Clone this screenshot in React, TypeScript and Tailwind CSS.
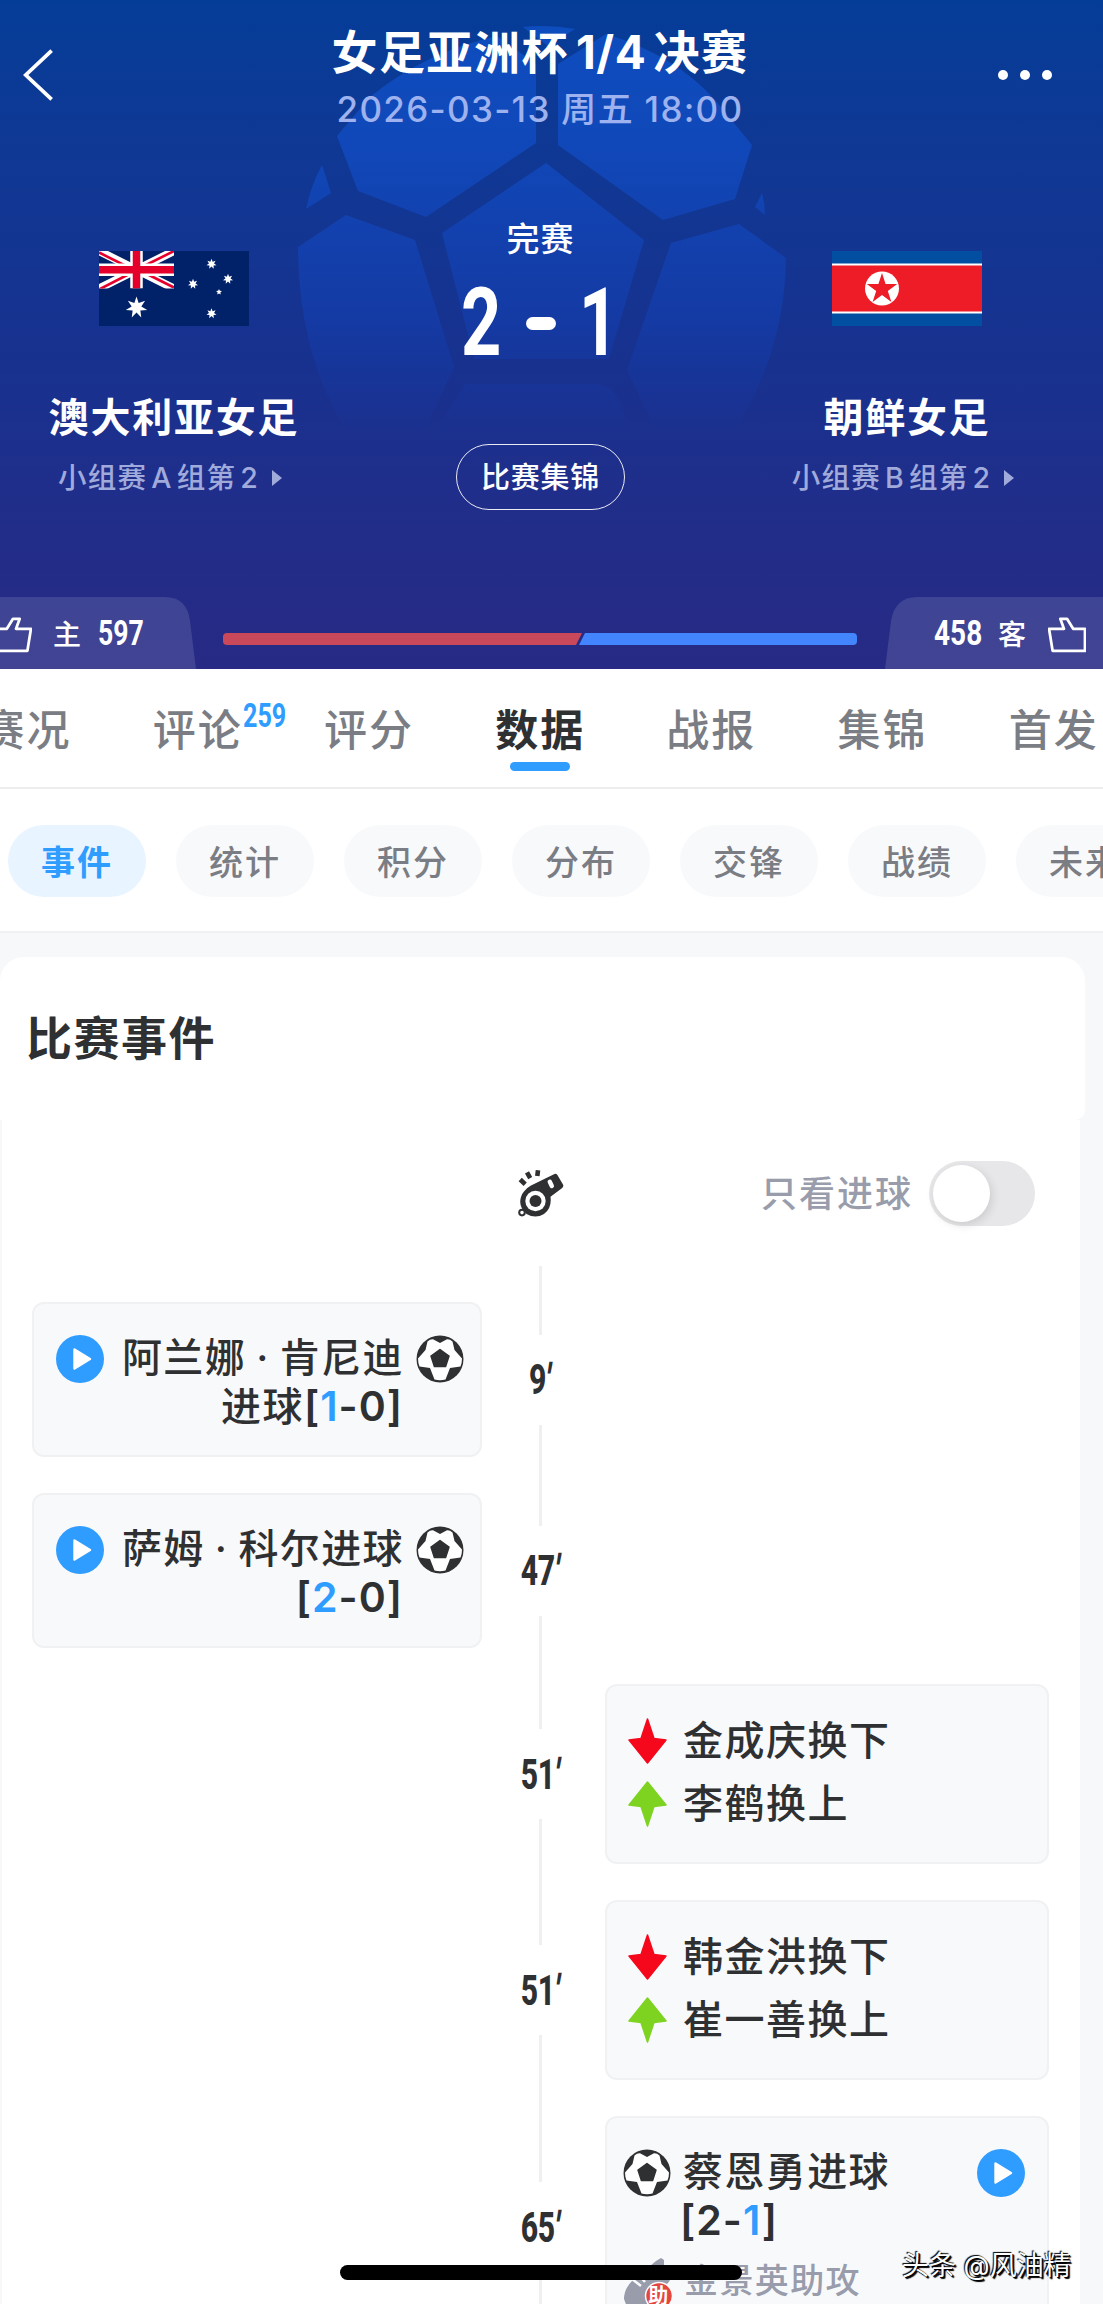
import React, { useState } from 'react';

type Side = 'home' | 'away';

interface MatchEvent {
  minute: string;
  side: Side;
  kind: 'goal' | 'sub';
  player: string;
  score?: [number, number];
  playerIn?: string;
  assist?: string;
}

const TABS = [
  { label: '赛况' },
  { label: '评论', count: 259 },
  { label: '评分' },
  { label: '数据' },
  { label: '战报' },
  { label: '集锦' },
  { label: '首发' },
];

const FILTERS = ['事件', '统计', '积分', '分布', '交锋', '战绩', '未来'];

const EVENTS: MatchEvent[] = [
  { minute: '9', side: 'home', kind: 'goal', player: '阿兰娜 · 肯尼迪', score: [1, 0] },
  { minute: '47', side: 'home', kind: 'goal', player: '萨姆 · 科尔', score: [2, 0] },
  { minute: '51', side: 'away', kind: 'sub', player: '金成庆', playerIn: '李鹤' },
  { minute: '51', side: 'away', kind: 'sub', player: '韩金洪', playerIn: '崔一善' },
  { minute: '65', side: 'away', kind: 'goal', player: '蔡恩勇', score: [2, 1], assist: '金景英' },
];

// n 角星的顶点坐标
const starPoints = (cx: number, cy: number, r: number, n: number, ratio: number) =>
  Array.from({ length: n * 2 }, (_, i) => {
    const rad = (Math.PI * i) / n - Math.PI / 2;
    const len = i % 2 ? r * ratio : r;
    return `${(cx + len * Math.cos(rad)).toFixed(2)},${(cy + len * Math.sin(rad)).toFixed(2)}`;
  }).join(' ');

const BallWatermark: React.FC = () => (
  <svg className="absolute left-0 top-0" width="1103" height="669" viewBox="0 0 1103 669">
    <defs>
      <linearGradient id="ballFade" gradientUnits="userSpaceOnUse" x1="0" y1="25" x2="0" y2="445">
        <stop offset="0" stopColor="#1257d6" stopOpacity="0.62" />
        <stop offset="0.3" stopColor="#1254d6" stopOpacity="0.55" />
        <stop offset="0.7" stopColor="#1148c8" stopOpacity="0.35" />
        <stop offset="1" stopColor="#1044b8" stopOpacity="0" />
      </linearGradient>
    </defs>
    <g fill="url(#ballFade)">
      <path d="M523 27 Q548 24 575 29 L548 46Z" />
      <path d="M536 64 L497 36 Q425 52 370 97 L337 136 L358 191 L426 217 L536 143Z" />
      <path d="M558 64 L606 34 Q675 55 715 100 L752 145 L735 199 L663 220 L558 145Z" />
      <path d="M322 165 L331 193 L306 209 Q311 185 322 165Z" />
      <path d="M762 193 Q765 204 765 215 L755 207Z" />
      <path d="M546 163 L644 240 L609 359 L474 359 L442 233Z" />
      <path d="M346 215 L415 240 L454 367 L425 430 L345 430 Q298 350 298 247Z" />
      <path d="M739 224 L671 243 L627 370 L655 430 L735 430 Q785 350 786 258Z" />
      <path d="M465 384 L600 384 Q625 390 628 440 L430 440Z" />
    </g>
  </svg>
);

const AustraliaFlag: React.FC = () => (
  <svg width="150" height="75" viewBox="0 0 150 75">
    <rect width="150" height="75" fill="#012169" />
    <svg width="75" height="37.5" viewBox="0 0 75 37.5">
      <path d="M0 0L75 37.5M75 0L0 37.5" stroke="#fff" strokeWidth="8" />
      <path d="M0 1.5L37 20M38 18L75 36.5M75 0L38 18.5M37 19.5L0 38.5" stroke="#e4002b" strokeWidth="2.6" />
      <path d="M37.5 0V37.5M0 18.75H75" stroke="#fff" strokeWidth="12.5" />
      <path d="M37.5 0V37.5M0 18.75H75" stroke="#e4002b" strokeWidth="7.5" />
    </svg>
    <g fill="#fff">
      <polygon points={starPoints(37.5, 56.5, 11, 7, 0.45)} />
      <polygon points={starPoints(112.5, 62.5, 5.2, 7, 0.5)} />
      <polygon points={starPoints(94, 33, 5.2, 7, 0.5)} />
      <polygon points={starPoints(112.5, 13, 5.2, 7, 0.5)} />
      <polygon points={starPoints(129, 28, 5.2, 7, 0.5)} />
      <polygon points={starPoints(120, 41, 3.1, 5, 0.45)} />
    </g>
  </svg>
);

const NorthKoreaFlag: React.FC = () => (
  <svg width="150" height="75" viewBox="0 0 150 75">
    <rect width="150" height="75" fill="#024fa2" />
    <rect y="12.5" width="150" height="50" fill="#fff" />
    <rect y="14.5" width="150" height="46" fill="#ed1c27" />
    <circle cx="50" cy="37.5" r="17" fill="#fff" />
    <polygon points={starPoints(50, 38, 16, 5, 0.382)} fill="#ed1c27" />
  </svg>
);

const ThumbIcon: React.FC<{ flip?: boolean }> = ({ flip }) => (
  <svg className={flip ? '-scale-x-100' : ''} width="38" height="36" viewBox="0.5 0.8 37 34.5" fill="none" stroke="#fff" strokeWidth="2.7" strokeLinejoin="round">
    <path d="M1.5 33.5V12L13 12L19 2.3H25.5L22 12H36.5L33 33.5Z" />
  </svg>
);

const PlayIcon: React.FC = () => (
  <svg className="mt-[2px] shrink-0" width="48" height="48" viewBox="0 0 48 48">
    <circle cx="24" cy="24" r="24" fill="#2f9cff" />
    <path d="M18.5 14.5L34 24L18.5 33.5Z" fill="#fff" stroke="#fff" strokeWidth="2.4" strokeLinejoin="round" />
  </svg>
);

const BallIcon: React.FC = () => (
  <svg className="mt-[2px] shrink-0" width="48" height="48" viewBox="0 0 48 48">
    <circle cx="24" cy="24" r="23.5" fill="#2f3032" />
    <path
      d="M11.5 6.5Q14 4 17 4.2L24 8L31 4.2Q34 4 36.5 6.5L38.5 15L46 23.5Q46 28 44.5 31.5L34 33L29.5 44.5Q24 46 18.5 44.5L14 33L3.5 31.5Q2 28 2 23.5L9.5 15Z"
      fill="#fff"
    />
    <path d="M24 14.5L33 21L29.6 31.5H18.4L15 21Z" fill="#2f3032" stroke="#2f3032" strokeWidth="1.5" strokeLinejoin="round" />
  </svg>
);

const WhistleIcon: React.FC = () => (
  <svg width="48" height="48" viewBox="0 0 48 48">
    <path d="M7 21.5Q10 17.5 14 15.5L37.5 4Q39.3 3.3 40.4 5L46 14.5Q47 16.5 45.2 18L33.5 26.8Q35 38.5 27 44Q18.5 49 9.5 44Q1 36 4 27Q5 23.5 7 21.5Z" fill="#2f3032" />
    <circle cx="18.5" cy="31" r="10.2" fill="#fff" />
    <circle cx="18.5" cy="31" r="6" fill="#2f3032" />
    <path d="M32.8 11.8L34.8 16" stroke="#fff" strokeWidth="4.4" strokeLinecap="round" />
    <path d="M3.2 9.5L8.2 14.2M10 2.4L13.2 8.2M21 0.3L20.3 6" stroke="#2f3032" strokeWidth="4.6" />
    <circle cx="5" cy="42.6" r="2.8" fill="#fff" stroke="#2f3032" strokeWidth="2" />
  </svg>
);

const SubArrow: React.FC<{ dir: 'up' | 'down' }> = ({ dir }) => (
  <svg className={dir === 'down' ? 'rotate-180' : ''} width="39" height="46" viewBox="0 0 39 46">
    <path d="M19.5 1L38 24L26 25.5L19.5 45L13 25.5L1 24Z" fill={dir === 'up' ? '#7ed321' : '#f5081c'} stroke={dir === 'up' ? '#7ed321' : '#f5081c'} strokeWidth="1.5" strokeLinejoin="round" />
  </svg>
);

const AssistIcon: React.FC = () => (
  <svg className="shrink-0" width="50" height="50" viewBox="0 0 50 50">
    <path d="M1 42Q1 32 9 24L33 4L38 1L41 3V10L48 16Q49 22 44 27L24 50H4Z" fill="#989cab" />
    <path d="M9 22L18 29M15 17L22 25" stroke="#f8f9fb" strokeWidth="2.6" />
    <circle cx="36" cy="39" r="13.5" fill="#e5453f" stroke="#f8f9fb" strokeWidth="1.5" />
    <text x="36" y="46" textAnchor="middle" fontSize="20" fontWeight="700" fill="#fff" fontFamily="Noto Sans CJK SC, sans-serif">助</text>
  </svg>
);

const Team: React.FC<{ name: string; rank: string; children: React.ReactNode }> = ({ name, rank, children }) => (
  <div className="flex w-[280px] flex-col items-center">
    {children}
    <div className="mt-[64px] text-[40px] leading-[56px] font-bold tracking-[1.8px]">{name}</div>
    <div className="mt-[8px] -ml-[8px] flex h-[48px] items-center gap-[13px] text-[28.5px] font-medium tracking-[1.3px] [word-spacing:-5px] text-[#a0aadb]">
      <span>{rank}</span>
      <svg width="10" height="16" viewBox="0 0 10 16"><path d="M0 0L10 8L0 16Z" fill="currentColor" /></svg>
    </div>
  </div>
);

const MatchHeader: React.FC = () => (
  <header className="relative h-[669px] overflow-hidden bg-linear-to-b from-[#043d98] via-[#18318f] via-55% to-[#272a84] text-white">
    <BallWatermark />
    <div className="relative flex h-[669px] flex-col">
      <div className="flex justify-between pt-[23px] pl-[22px] pr-[51px]">
        <svg className="mt-[25px]" width="32" height="54" viewBox="0 0 34 56" fill="none">
          <path d="M31.5 2L4 28L31.5 54" stroke="#fff" strokeWidth="4" />
        </svg>
        <div className="ml-[28px] flex flex-col items-center">
          <h1 className="flex gap-[7px] text-[46px] leading-[58px] font-bold tracking-[1.5px]">
            <span>女足亚洲杯</span>
            <span className="tracking-[0.6px]">1/4</span>
            <span>决赛</span>
          </h1>
          <p className="text-[35px] leading-[56px] font-medium tracking-[1.3px] text-[#9db2ee]">2026-03-13 周五 18:00</p>
        </div>
        <div className="mt-[47px] flex h-[10px] gap-[12px]">
          <i className="size-[10px] rounded-full bg-white" />
          <i className="size-[10px] rounded-full bg-white" />
          <i className="size-[10px] rounded-full bg-white" />
        </div>
      </div>

      <div className="mt-[76px] flex justify-between pl-[34px] pr-[56px]">
        <div className="pt-[38px]">
          <Team name="澳大利亚女足" rank="小组赛 A 组第 2"><AustraliaFlag /></Team>
        </div>
        <div className="flex flex-col items-center">
          <div className="text-[33px] leading-[52px] font-medium tracking-[1px]">完赛</div>
          <div className="mt-[10px] flex h-[96px] items-center justify-center gap-[23px] font-[Roboto] text-[95px] leading-[96px] font-bold">
            <span className="w-[42px] origin-left scale-x-[0.74]">2</span>
            <span className="h-[13px] w-[30px] rounded-full bg-white" />
            <span className="w-[42px] origin-left scale-x-[0.72]">1</span>
          </div>
          <button className="mt-[73px] h-[66px] w-[169px] rounded-full border border-white/90 pt-[1px] text-[29px] font-medium tracking-[0.8px]">比赛集锦</button>
        </div>
        <div className="pt-[38px]">
          <Team name="朝鲜女足" rank="小组赛 B 组第 2"><NorthKoreaFlag /></Team>
        </div>
      </div>

      {/* 主客支持率 */}
      <div className="mt-auto flex h-[72px] items-center justify-between">
        <div className="relative h-[72px] w-[197px]">
          <svg className="absolute left-0 top-0" width="197" height="72" viewBox="0 0 197 72">
            <path d="M0 0H165Q187 0 190 24L196 72H0Z" fill="#fff" fillOpacity="0.12" />
          </svg>
          <div className="relative flex h-[72px] items-center pt-[3px]">
            <span className="-ml-[6px]"><ThumbIcon /></span>
            <span className="ml-[21px] text-[28px] font-medium">主</span>
            <span className="ml-[17px] w-[48px] origin-left scale-x-[0.76] font-[Roboto] text-[35px] font-bold">597</span>
          </div>
        </div>
        <div className="mt-[12px] -ml-[2px] flex h-[12px] w-[634px]">
          <span className="h-[12px] w-[359px] rounded-l-[4px] bg-[#c9485a] [clip-path:polygon(0_0,100%_0,calc(100%-6px)_100%,0_100%)]" />
          <span className="-ml-[3px] h-[12px] flex-1 rounded-r-[4px] bg-[#4285ff] [clip-path:polygon(6px_0,100%_0,100%_100%,0_100%)]" />
        </div>
        <div className="relative h-[72px] w-[218px]">
          <svg className="absolute right-0 top-0" width="218" height="72" viewBox="0 0 218 72">
            <path d="M218 0H32Q10 0 6 24L0 72H218Z" fill="#fff" fillOpacity="0.12" />
          </svg>
          <div className="relative flex h-[72px] items-center pt-[3px] pl-[49px]">
            <span className="w-[48px] origin-left scale-x-[0.8] font-[Roboto] text-[35px] font-bold">458</span>
            <span className="ml-[16px] text-[28px] font-medium">客</span>
            <span className="ml-[22px]"><ThumbIcon flip /></span>
          </div>
        </div>
      </div>
    </div>
  </header>
);

const EventCard: React.FC<{ event: MatchEvent }> = ({ event }) => {
  const isHome = event.side === 'home';

  if (event.kind === 'sub') {
    return (
      <div className="h-[180px] w-[444px] rounded-[12px] border-2 border-[#f0f1f3] bg-[#f8f9fb] pt-[23px] pl-[21px]">
        {(['down', 'up'] as const).map(dir => (
          <div key={dir} className="flex h-[63px] items-center gap-[16px] text-[40px] font-medium tracking-[1.5px]">
            <SubArrow dir={dir} />
            <span>{dir === 'down' ? `${event.player}换下` : `${event.playerIn}换上`}</span>
          </div>
        ))}
      </div>
    );
  }

  const [home, away] = event.score!;
  return (
    <div className={`rounded-[12px] border-2 border-[#f0f1f3] bg-[#f8f9fb] pt-[29px] ${isHome ? 'h-[155px] w-[450px] pr-[16px] pl-[22px]' : 'h-[222px] w-[444px] pr-[22px] pl-[16px]'}`}>
      <div className={`flex justify-between ${isHome ? '' : 'flex-row-reverse'}`}>
        <PlayIcon />
        <div className={`flex gap-[12px] ${isHome ? '' : 'flex-row-reverse'}`}>
          <div className={`w-[292px] text-[40px] leading-[49px] font-medium tracking-[1.4px] [word-spacing:-2px] ${isHome ? 'text-right' : ''}`}>
            {event.player}进球
            <span className={`inline-block text-[41px] font-semibold tracking-[1px] ${isHome ? 'mr-px' : '-ml-[3px]'}`}>
              [<b className={`font-semibold ${isHome ? 'text-[#2f9cff]' : ''}`}>{home}</b>-<b className={`font-semibold ${isHome ? '' : 'text-[#2f9cff]'}`}>{away}</b>]
            </span>
          </div>
          <BallIcon />
        </div>
      </div>
      {event.assist && (
        <div className="mt-[9px] flex items-start gap-[11px] text-[34px] leading-[54px] font-medium tracking-[1.4px] text-[#989cab]">
          <span className="mt-[3px]"><AssistIcon /></span>
          <span>{event.assist}助攻</span>
        </div>
      )}
    </div>
  );
};

const EventRow: React.FC<{ event: MatchEvent }> = ({ event }) => (
  <div className="flex shrink-0">
    <div className="w-[481px] py-[18px] pl-[32px]">{event.side === 'home' && <EventCard event={event} />}</div>
    <div className="flex w-[119px] flex-col items-center">
      <div className="w-[3px] flex-1 bg-[#eeeff0]" />
      <div className="flex h-[90px] scale-x-[0.7] items-center pr-[3px] font-[Roboto] text-[43px] font-extrabold tracking-[-0.5px]">
        {event.minute}<i className="-skew-x-[12deg] not-italic">′</i>
      </div>
      <div className="w-[3px] flex-1 bg-[#eeeff0]" />
    </div>
    <div className="py-[18px] pl-[5px]">{event.side === 'away' && <EventCard event={event} />}</div>
  </div>
);

const App: React.FC = () => {
  const [activeTab, setActiveTab] = useState('数据');
  const [activeFilter, setActiveFilter] = useState('事件');
  const [goalsOnly, setGoalsOnly] = useState(false);

  const events = goalsOnly ? EVENTS.filter(e => e.kind === 'goal') : EVENTS;

  return (
    <div className="relative h-[2304px] w-[1103px] overflow-hidden bg-[#f7f8fa] font-['Inter','Noto_Sans_CJK_SC',sans-serif] text-[#2f3032]">
      <MatchHeader />

      <nav className="flex h-[120px] overflow-hidden border-b-2 border-[#ededee] bg-white">
        <div className="-ml-[59px] flex shrink-0">
          {TABS.map(tab => (
            <button
              key={tab.label}
              onClick={() => setActiveTab(tab.label)}
              className={`relative flex w-[171.2px] shrink-0 flex-col items-center pt-[29px] text-[43px] leading-[64px] tracking-[2px] ${activeTab === tab.label ? 'font-bold text-[#2f3032]' : 'font-medium text-[#7b7d84]'}`}
            >
              {tab.label}
              {tab.count && (
                <span className="absolute left-[131px] top-[27px] origin-left scale-x-[0.76] font-[Roboto] text-[33px] leading-[40px] font-bold tracking-normal text-[#2f9cff]">{tab.count}</span>
              )}
              {activeTab === tab.label && <span className="h-[9px] w-[60px] rounded-full bg-[#2f9cff]" />}
            </button>
          ))}
        </div>
      </nav>

      <div className="flex h-[144px] gap-[30px] overflow-hidden border-b-2 border-[#f0f1f3] bg-white pt-[36px] pl-[8px]">
        {FILTERS.map(name => (
          <button
            key={name}
            onClick={() => setActiveFilter(name)}
            className={`h-[72px] w-[138px] shrink-0 rounded-full pt-[2px] text-[34px] tracking-[2px] ${activeFilter === name ? 'bg-[#e8f4ff] font-bold text-[#2f9cff]' : 'bg-[#f8f9fb] font-medium text-[#7b7d84]'}`}
          >
            {name}
          </button>
        ))}
      </div>

      <section className="mt-[24px] h-[163px] w-[1085px] rounded-t-[24px] rounded-br-[10px] bg-white pt-[48px] pl-[26px]">
        <h2 className="text-[46px] leading-[66px] font-bold tracking-[1.5px]">比赛事件</h2>
      </section>

      <section className="flex h-[1184px] w-[1080px] flex-col border-l-2 border-[#f7f8fa] bg-white">
        <div className="ml-[-2px] flex h-[146px] shrink-0 items-start justify-between pl-[517px] pr-[45px]">
          <div className="mt-[50px]"><WhistleIcon /></div>
          <button onClick={() => setGoalsOnly(!goalsOnly)} className="mt-[41px] flex items-center gap-[16px]">
            <span className="text-[36px] font-medium tracking-[2px] text-[#989cab]">只看进球</span>
            <span className={`flex h-[65px] w-[106px] items-center rounded-full px-[4px] ${goalsOnly ? 'justify-end bg-[#2f9cff]' : 'bg-[#e7e7e9]'}`}>
              <i className="size-[57px] rounded-full bg-white shadow-[2px_3px_10px_rgba(0,0,0,0.12)]" />
            </span>
          </button>
        </div>
        <div className="ml-[537px] h-[18px] w-[3px] shrink-0 bg-[#eeeff0]" />
        {events.map(event => (
          <div key={event.minute + event.player} className="ml-[-2px] flex shrink-0"><EventRow event={event} /></div>
        ))}
      </section>

      <div className="absolute left-[340px] top-[2265px] h-[15px] w-[402px] rounded-full bg-black" />
      <div className="absolute left-[902px] top-[2246px] text-[27px] leading-[40px] whitespace-nowrap text-white [text-shadow:-1px_-1px_1px_#000,1px_1px_0_#000,2px_2px_1px_#000]">头条 @风油精</div>
    </div>
  );
};

export default App;
